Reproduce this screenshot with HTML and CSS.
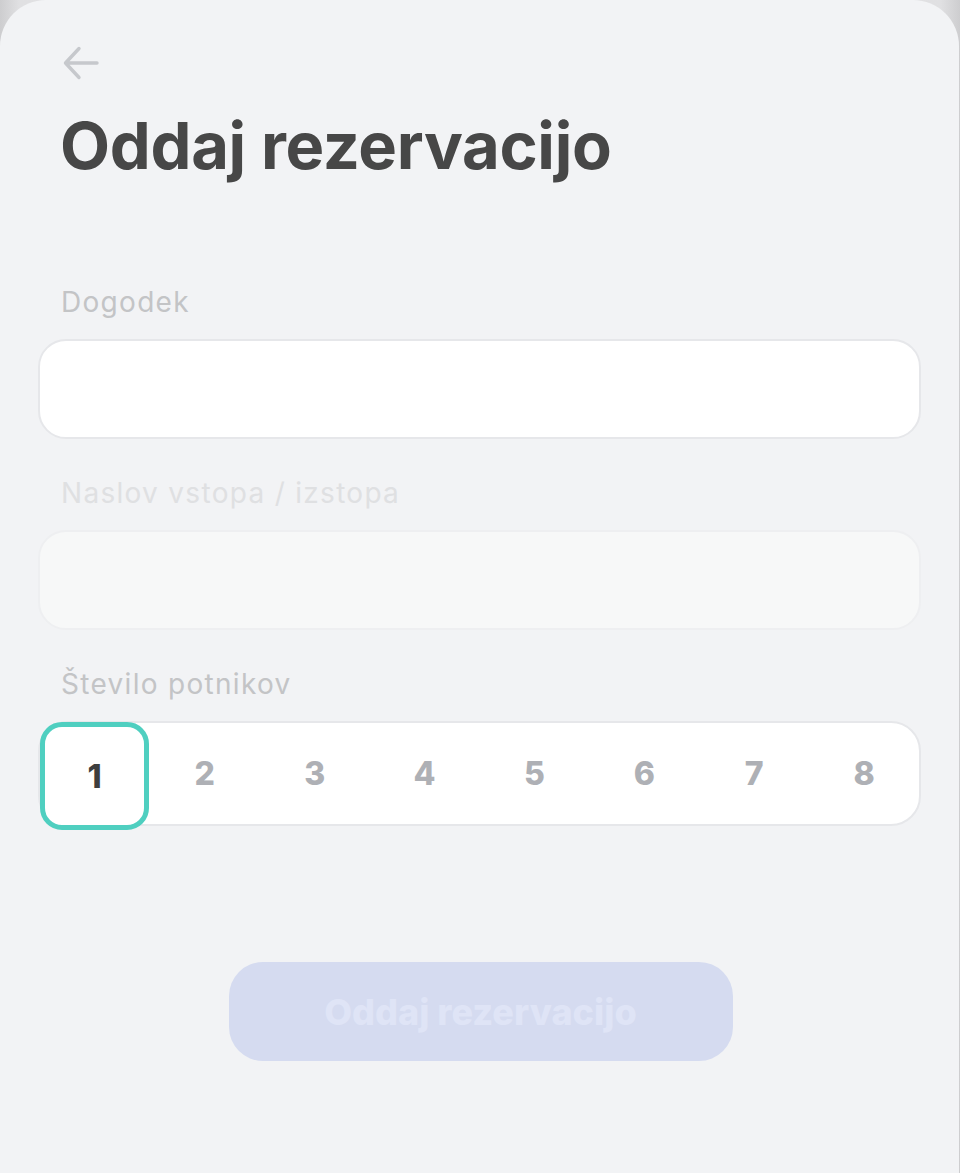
FILE: index.html
```html
<!DOCTYPE html>
<html lang="sl">
<head>
<meta charset="utf-8">
<link rel="stylesheet" href="styles.css">
</head>
<body>
<div class="sheet">
  <button class="back" aria-label="Nazaj">
    <svg width="38" height="36" viewBox="0 0 38 36" fill="none" stroke="#c6c8cc" stroke-width="3.4" stroke-linecap="round" stroke-linejoin="round"><path d="M35 17H4M17 2.5L3.5 17L17 31.5"/></svg>
  </button>
  <h1 class="title">Oddaj rezervacijo</h1>
  <div class="field field-first">
    <label class="label">Dogodek</label>
    <div class="input"></div>
  </div>
  <div class="field">
    <label class="label label-disabled">Naslov vstopa / izstopa</label>
    <div class="input input-disabled"></div>
  </div>
  <div class="field">
    <label class="label">Število potnikov</label>
    <div class="counter">
      <div class="num num-active">1</div>
      <div class="num">2</div>
      <div class="num">3</div>
      <div class="num">4</div>
      <div class="num">5</div>
      <div class="num">6</div>
      <div class="num">7</div>
      <div class="num">8</div>
    </div>
  </div>
  <div class="actions">
    <button class="submit">Oddaj rezervacijo</button>
  </div>
</div>
</body>
</html>
```
FILE: styles.css
```css
html, body {
  margin: 0;
  padding: 0;
  height: 100%;
}
body {
  background: linear-gradient(90deg, #cdcdcf 0%, #e0e0e2 2%, #e8e8ea 50%, #e0e0e2 98%, #cdcdcf 100%);
  font-family: Inter, "Noto Sans", sans-serif;
  overflow: hidden;
}
.sheet {
  box-sizing: border-box;
  margin: 0 1px 0 0;
  height: 1173px;
  background: #f2f3f5;
  border-radius: 46px 46px 0 0;
  padding: 46px 38px 0 38px;
}
.back {
  display: block;
  background: none;
  border: 0;
  padding: 0;
  margin: 0 0 0 24px;
  width: 38px;
  height: 36px;
}
.back svg { display: block; }
.title {
  margin: 24px 0 0 22px;
  font-size: 65px;
  font-weight: 700;
  color: #474747;
  letter-spacing: -0.3px;
  line-height: 80px;
}
.field {
  display: flex;
  flex-direction: column;
  margin-top: 34px;
}
.field-first { margin-top: 96px; }
.label {
  margin: 0 0 17px 23px;
  font-size: 28px;
  letter-spacing: 1.3px;
  line-height: 40px;
  color: #c3c4c6;
}
.label-disabled { color: #dfe0e2; }
.input {
  box-sizing: border-box;
  height: 100px;
  background: #fff;
  border: 2px solid #e6e7ea;
  border-radius: 28px;
}
.input-disabled {
  background: #f7f8f8;
  border-color: #eeeff1;
}
.counter {
  box-sizing: border-box;
  display: grid;
  grid-template-columns: repeat(8, 1fr);
  height: 105px;
  background: #fff;
  border: 2px solid #e6e7ea;
  border-radius: 30px;
}
.num {
  display: flex;
  align-items: center;
  justify-content: center;
  font-size: 32px;
  font-weight: 800;
  color: #aeb0b5;
}
.num-active {
  color: #3e3e3e;
  margin: -1px 1px -6px 0;
  border: 5px solid #4fcfc0;
  border-radius: 22px;
  background: #fff;
  position: relative;
  z-index: 1;
}
.actions {
  display: flex;
  justify-content: center;
  margin-top: 136px;
}
.submit {
  box-sizing: border-box;
  width: 504px;
  height: 99px;
  border: 0;
  border-radius: 34px;
  background: #d5dbf0;
  color: #dfe4f6;
  font-family: Inter, "Noto Sans", sans-serif;
  font-size: 36px;
  font-weight: 800;
  margin-left: 2px;
}
```
